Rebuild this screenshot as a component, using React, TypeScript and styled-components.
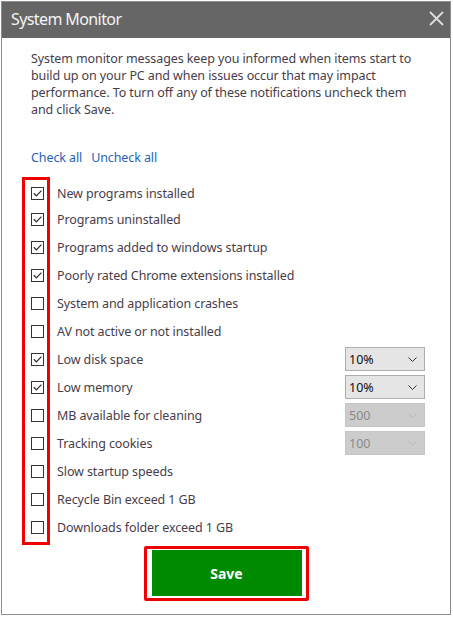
import React from "react";
import styled, { createGlobalStyle } from "styled-components";

const Global = createGlobalStyle`
  html, body { margin: 0; padding: 0; background: #ffffff; }
  body { font-family: "Noto Sans", "Open Sans", sans-serif; }
`;

const Dialog = styled.div`
  margin: 1px;
  width: 450px;
  height: 614px;
  box-sizing: border-box;
  border: 1px solid #8e8e8e;
  background: #ffffff;
  display: flex;
  flex-direction: column;
`;

const TitleBar = styled.div`
  height: 36px;
  background: #666666;
  display: flex;
  align-items: center;
  justify-content: space-between;
  padding: 0 5px 2px 9px;
  box-sizing: border-box;
`;

const Title = styled.div`
  color: #f4f4f4;
  font-size: 16px;
  letter-spacing: -0.6px;
  font-family: "Noto Sans", sans-serif;
`;

const CloseBtn = styled.button`
  border: none;
  background: transparent;
  padding: 0;
  width: 18px;
  height: 18px;
  display: flex;
  align-items: center;
  justify-content: center;
  margin-top: -2px;
`;

const Body = styled.div`
  padding: 12px 25px 0 29px;
  display: flex;
  flex-direction: column;
  flex: 1;
`;

const Description = styled.p`
  margin: 0;
  font-size: 12.5px;
  letter-spacing: -0.1px;
  line-height: 17px;
  color: #473d4a;
`;

const Links = styled.div`
  margin-top: 31px;
  display: flex;
  gap: 9px;
`;

const TextLink = styled.a`
  font-size: 12.5px;
  letter-spacing: -0.1px;
  line-height: 17px;
  color: #1f62b5;
  cursor: pointer;
`;

const ListArea = styled.div`
  margin-top: 11px;
  margin-left: -9px;
  display: flex;
  gap: 7px;
`;

const CheckColumn = styled.div`
  border: 3px solid #ee0000;
  width: 22px;
  padding-top: 1px;
  padding-bottom: 1px;
  display: flex;
  flex-direction: column;
`;

const LabelColumn = styled.div`
  padding-top: 4px;
  flex: 1;
  display: flex;
  flex-direction: column;
`;

const CheckCell = styled.div<{ $first?: boolean }>`
  height: ${(p) => (p.$first ? 24 : 28)}px;
  display: flex;
  align-items: center;
  padding-left: 6px;
`;

const Row = styled.div<{ $first?: boolean }>`
  height: ${(p) => (p.$first ? 24 : 28)}px;
  display: flex;
  align-items: center;
  justify-content: space-between;
`;

const Label = styled.span`
  font-size: 12.5px;
  letter-spacing: -0.1px;
  color: #473d4a;
`;

const Box = styled.span`
  width: 13px;
  height: 13px;
  box-sizing: border-box;
  border: 1px solid #333333;
  background: #ffffff;
  display: flex;
  align-items: center;
  justify-content: center;
`;

const Select = styled.div<{ $disabled?: boolean }>`
  width: 80px;
  height: 24px;
  box-sizing: border-box;
  border: 1px solid ${(p) => (p.$disabled ? "#c4c4c4" : "#adadad")};
  background: ${(p) => (p.$disabled ? "#cccccc" : "#e5e5e5")};
  color: ${(p) => (p.$disabled ? "#8a8a8a" : "#111111")};
  font-size: 12.5px;
  display: flex;
  align-items: center;
  justify-content: space-between;
  padding: 0 7px 0 3px;
`;

const Footer = styled.div`
  display: flex;
  justify-content: center;
  margin-top: 1px;
  margin-left: -29px;
  margin-right: -25px;
`;

const SaveOutline = styled.div`
  border: 3px solid #ee0000;
  padding: 1px 4px 2px 5px;
  border-radius: 2px;
`;

const SaveButton = styled.button`
  width: 150px;
  height: 46px;
  border: none;
  background: #008a00;
  color: #ffffff;
  font-family: "Noto Sans", sans-serif;
  font-weight: 700;
  font-size: 14px;
  cursor: pointer;
`;

type Item = { label: string; checked: boolean; select?: { value: string; disabled?: boolean } };

const items: Item[] = [
  { label: "New programs installed", checked: true },
  { label: "Programs uninstalled", checked: true },
  { label: "Programs added to windows startup", checked: true },
  { label: "Poorly rated Chrome extensions installed", checked: true },
  { label: "System and application crashes", checked: false },
  { label: "AV not active or not installed", checked: false },
  { label: "Low disk space", checked: true, select: { value: "10%" } },
  { label: "Low memory", checked: true, select: { value: "10%" } },
  { label: "MB available for cleaning", checked: false, select: { value: "500", disabled: true } },
  { label: "Tracking cookies", checked: false, select: { value: "100", disabled: true } },
  { label: "Slow startup speeds", checked: false },
  { label: "Recycle Bin exceed 1 GB", checked: false },
  { label: "Downloads folder exceed 1 GB", checked: false },
];

const Check = ({ checked }: { checked: boolean }) => (
  <Box>
    {checked && (
      <svg width="11" height="11" viewBox="0 0 11 11">
        <path d="M1.8 5.3 L4.4 7.9 L9.4 2.6" fill="none" stroke="#2e2e2e" strokeWidth="1.25" />
      </svg>
    )}
  </Box>
);

const Chevron = ({ color }: { color: string }) => (
  <svg width="9" height="5" viewBox="0 0 9 5">
    <path d="M0.5 0.5 L4.5 4.5 L8.5 0.5" fill="none" stroke={color} strokeWidth="1" />
  </svg>
);

export default function App() {
  return (
    <>
      <Global />
      <Dialog>
        <TitleBar>
          <Title>System Monitor</Title>
          <CloseBtn aria-label="Close">
            <svg width="15" height="15" viewBox="0 0 15 15">
              <path d="M1 1 L14 14 M14 1 L1 14" stroke="#dcdcdc" strokeWidth="1.8" />
            </svg>
          </CloseBtn>
        </TitleBar>
        <Body>
          <Description>
            System monitor messages keep you informed when items start to build up on your PC and when issues occur
            that may impact performance. To turn off any of these notifications uncheck them and click Save.
          </Description>
          <Links>
            <TextLink>Check all</TextLink>
            <TextLink>Uncheck all</TextLink>
          </Links>
          <ListArea>
            <CheckColumn>
              {items.map((it, i) => (
                <CheckCell key={it.label} $first={i === 0}>
                  <Check checked={it.checked} />
                </CheckCell>
              ))}
            </CheckColumn>
            <LabelColumn>
              {items.map((it, i) => (
                <Row key={it.label} $first={i === 0}>
                  <Label>{it.label}</Label>
                  {it.select && (
                    <Select $disabled={it.select.disabled}>
                      <span>{it.select.value}</span>
                      <Chevron color={it.select.disabled ? "#b5b5b5" : "#333"} />
                    </Select>
                  )}
                </Row>
              ))}
            </LabelColumn>
          </ListArea>
          <Footer>
            <SaveOutline>
              <SaveButton>Save</SaveButton>
            </SaveOutline>
          </Footer>
        </Body>
      </Dialog>
    </>
  );
}
